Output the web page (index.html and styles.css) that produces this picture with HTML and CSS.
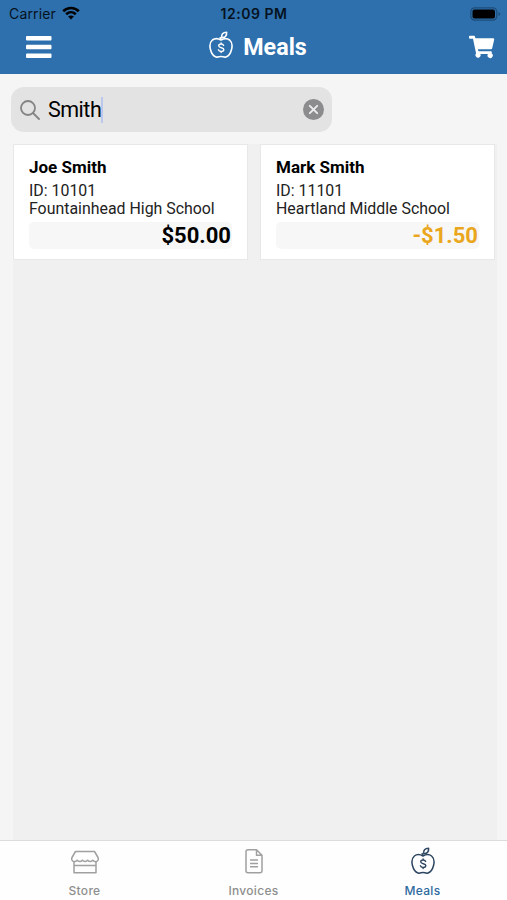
FILE: index.html
```html
<!DOCTYPE html>
<html lang="en">
<head>
    <meta charset="UTF-8">
    <meta name="viewport" content="width=device-width, initial-scale=1.0">
    <title>Meals</title>
    <link rel="stylesheet" href="styles.css">
</head>
<body>
    <!-- shared apple icon -->
    <svg class="symbols">
        <symbol id="apple" viewBox="0 0 24 28">
            <path d="M12 9C9.4 7.5 5.8 7.1 3.4 9C.8 11.2.6 15 1.4 18.3C2.2 21.6 4.1 25.1 7 26C8.9 26.6 10.2 25.5 12 25.5C13.8 25.5 15.1 26.6 17 26C19.9 25.1 21.8 21.6 22.6 18.3C23.4 15 23.2 11.2 20.6 9C18.2 7.1 14.6 7.5 12 9C12 8.2 11.8 7.4 11.2 6.6"/>
            <path d="M12.8 6.6C12 3.4 14 1.3 17.6 1.2C18 4.7 16.2 6.9 12.8 6.6Z"/>
            <path class="dollar" d="M14.6 14.4C14.1 13.4 13.2 13 12.1 13C10.6 13 9.7 13.7 9.7 14.8C9.7 17.4 14.8 16 14.8 18.6C14.8 19.8 13.6 20.5 12.2 20.5C10.8 20.5 9.8 19.9 9.4 18.8M12.1 12V13M12.1 20.5V21.5"/>
        </symbol>
    </svg>

    <header class="header">
        <div class="status-bar">
            <div class="carrier">
                <span>Carrier</span>
                <svg class="wifi" viewBox="0 0 18 14">
                    <path d="M1.2 5.2C5.6.9 12.4.9 16.8 5.2" />
                    <path d="M4.2 8.3C7 5.6 11 5.6 13.8 8.3" />
                    <path class="dot" d="M9 13.5L6.1 10.6C7.7 9.1 10.3 9.1 11.9 10.6Z" />
                </svg>
            </div>
            <div class="time">12:09 PM</div>
            <div class="battery">
                <svg width="31" height="14" viewBox="0 0 31 14">
                    <rect class="battery-case" x=".8" y=".8" width="26" height="12.4" rx="4"/>
                    <rect x="2.5" y="2.5" width="22.5" height="9" rx="2"/>
                    <path class="battery-tip" d="M28.5 5V9Q30.3 8.2 30.3 7T28.5 5Z"/>
                </svg>
            </div>
        </div>
        <div class="title-bar">
            <button class="icon-button" aria-label="Menu">
                <svg width="26" height="24" viewBox="0 0 26 24">
                    <rect y="1" width="25.5" height="4.6" rx="1"/>
                    <rect y="9.7" width="25.5" height="4.6" rx="1"/>
                    <rect y="18.4" width="25.5" height="4.6" rx="1"/>
                </svg>
            </button>
            <div class="title">
                <svg class="apple"><use href="#apple"/></svg>
                <h1>Meals</h1>
            </div>
            <button class="icon-button" aria-label="Cart">
                <svg width="26" height="24" viewBox="0 0 26 24">
                    <path d="M1 .7H5Q5.8.7 6 1.5L6.4 3.3H24.2Q25.5 3.3 25.2 4.6L23.2 13.2Q22.9 14.2 22 14.2H9L9.4 16.3H21.9Q23 16.3 22.8 17.5L22.6 18.3A2.6 2.6 0 1 1 19 19H11.4A2.6 2.6 0 1 1 7.1 18.4L4 3.7H1Q0 3.7 0 2.8V1.6Q0 .7 1 .7Z"/>
                </svg>
            </button>
        </div>
    </header>

    <main class="content">
        <div class="search">
            <svg class="search-icon" width="20" height="20" viewBox="0 0 20 20">
                <circle cx="8" cy="8" r="7"/>
                <path d="M13 13L19 19"/>
            </svg>
            <span class="search-text">Smith</span>
            <span class="caret"></span>
            <svg class="clear" width="21" height="21" viewBox="0 0 21 21">
                <circle cx="10.5" cy="10.5" r="10.5"/>
                <path d="M6.8 6.8L14.2 14.2M14.2 6.8L6.8 14.2"/>
            </svg>
        </div>

        <div class="card-list">
            <div class="card">
                <h2>Joe Smith</h2>
                <p>ID: 10101</p>
                <p>Fountainhead High School</p>
                <div class="balance">$50.00</div>
            </div>
            <div class="card">
                <h2>Mark Smith</h2>
                <p>ID: 11101</p>
                <p>Heartland Middle School</p>
                <div class="balance negative">-$1.50</div>
            </div>
        </div>
    </main>

    <nav class="tab-bar">
        <a class="tab">
            <svg width="28" height="28" viewBox="0 0 28 28">
                <path d="M4.5 4.5H23.5L27 10.5C27.8 12.6 26.8 14.4 25 14.6C23.5 14.8 22.4 14.2 21.8 13.2C20.8 15 17.6 15 16.6 13.2C15.5 15 12.5 15 11.4 13.2C10.4 15 7.2 15 6.2 13.2C5.6 14.2 4.5 14.8 3 14.6C1.2 14.4.2 12.6 1 10.5Z"/>
                <path d="M3 14.6V25.8H25V14.6M3 18.5H25"/>
            </svg>
            <span>Store</span>
        </a>
        <a class="tab">
            <svg width="28" height="28" viewBox="0 0 28 28">
                <path d="M16.5 2.8H8Q6 2.8 6 4.8V23.8Q6 25.8 8 25.8H20Q22 25.8 22 23.8V8.3L16.5 2.8V8.3H22"/>
                <path d="M10 13H18M10 16.4H18M10 19.8H18"/>
            </svg>
            <span>Invoices</span>
        </a>
        <a class="tab active">
            <svg class="apple"><use href="#apple"/></svg>
            <span>Meals</span>
        </a>
    </nav>
</body>
</html>
```
FILE: styles.css
```css
* {
    box-sizing: border-box;
}
body {
    display: flex;
    flex-direction: column;
    height: 900px;
    margin: 0;
    font-family: Roboto, sans-serif;
    background-color: #f5f5f5;
    color: #000;
}
h1, h2, p {
    margin: 0;
}
.symbols {
    display: none;
}
.header {
    height: 74px;
    background-color: #2d70ad;
}
.status-bar {
    display: grid;
    grid-template-columns: 1fr auto 1fr;
    align-items: center;
    height: 27px;
    padding: 0 6px 0 9px;
    font-family: Inter, sans-serif;
    font-size: 14px;
    color: #06121e;
}
.carrier {
    display: flex;
    align-items: center;
    gap: 6px;
    letter-spacing: .15px;
}
.wifi {
    width: 18px;
    height: 14px;
    margin-top: -2px;
    fill: none;
    stroke: #000;
    stroke-width: 2.6;
}
.wifi .dot {
    fill: #000;
    stroke: none;
}
.time {
    font-weight: 600;
    letter-spacing: .5px;
    margin-right: 2px;
}
.battery {
    display: flex;
    justify-content: flex-end;
}
.battery-case {
    fill: none;
    stroke: #1d4c78;
    stroke-width: 1.2;
}
.battery-tip {
    fill: #1d4c78;
}
.title-bar {
    display: grid;
    grid-template-columns: 1fr auto 1fr;
    height: 40px;
    padding: 0 12px 0 26px;
    align-items: center;
}
.icon-button {
    display: flex;
    justify-self: start;
    padding: 0;
    border: none;
    background: none;
    fill: #fff;
}
.icon-button:last-child {
    justify-self: end;
}
.title {
    display: flex;
    align-items: center;
    gap: 10px;
    margin-right: 5px;
    color: #fff;
}
.title h1 {
    font-size: 23.3px;
    line-height: 28px;
}
.title .apple {
    margin-bottom: 5px;
}
.apple {
    width: 24px;
    height: 28px;
    fill: none;
    stroke: currentColor;
    stroke-width: 1.6;
    stroke-linecap: round;
    stroke-linejoin: round;
}
.dollar {
    stroke-width: 1.4;
}
.content {
    flex: 1;
    display: flex;
    flex-direction: column;
    padding: 13px 10px 0 11px;
}
.search {
    display: flex;
    align-items: center;
    width: 321px;
    height: 45px;
    padding: 0 8px 0 9px;
    border-radius: 13px;
    background-color: #e3e3e3;
}
.search-icon {
    fill: none;
    stroke: #848486;
    stroke-width: 1.8;
    stroke-linecap: round;
}
.search-text {
    margin-left: 8px;
    font-size: 21.5px;
    letter-spacing: -.5px;
}
.caret {
    width: 2px;
    height: 26px;
    background-color: #bcc7ee;
}
.clear {
    margin-left: auto;
    fill: #8c8c8e;
}
.clear path {
    stroke: #ececec;
    stroke-width: 1.9;
    stroke-linecap: round;
}
.card-list {
    flex: 1;
    display: flex;
    align-items: flex-start;
    gap: 12px;
    margin: 12px 0 0 2px;
    background-color: #f0f0f0;
}
.card {
    width: 235px;
    height: 116px;
    padding: 12px 15px 0;
    border: 1px solid #e8e8e8;
    background-color: #fff;
}
.card h2 {
    font-size: 17px;
    line-height: 20px;
    margin-bottom: 5px;
}
.card p {
    font-size: 15.9px;
    line-height: 18px;
    color: #222;
}
.balance {
    height: 27px;
    margin-top: 4px;
    padding-right: 1px;
    border-radius: 5px;
    background-color: #f7f7f7;
    font-size: 22px;
    font-weight: bold;
    line-height: 27px;
    text-align: right;
}
.negative {
    color: #eaa61c;
}
.tab-bar {
    display: flex;
    height: 60px;
    border-top: 1px solid #dcdcdc;
    background-color: #fefefe;
}
.tab {
    flex: 1;
    display: flex;
    flex-direction: column;
    align-items: center;
    gap: 8px;
    padding-top: 6px;
    color: #8e8e8e;
    font-family: Inter, sans-serif;
    font-size: 12px;
    font-weight: 500;
    line-height: 16px;
    letter-spacing: .3px;
}
.tab svg {
    fill: none;
    stroke: #a0a0a0;
    stroke-width: 1.5;
    stroke-linejoin: round;
}
.tab.active {
    color: #2d6a9f;
}
.tab.active svg {
    stroke: #2c4560;
}
```
